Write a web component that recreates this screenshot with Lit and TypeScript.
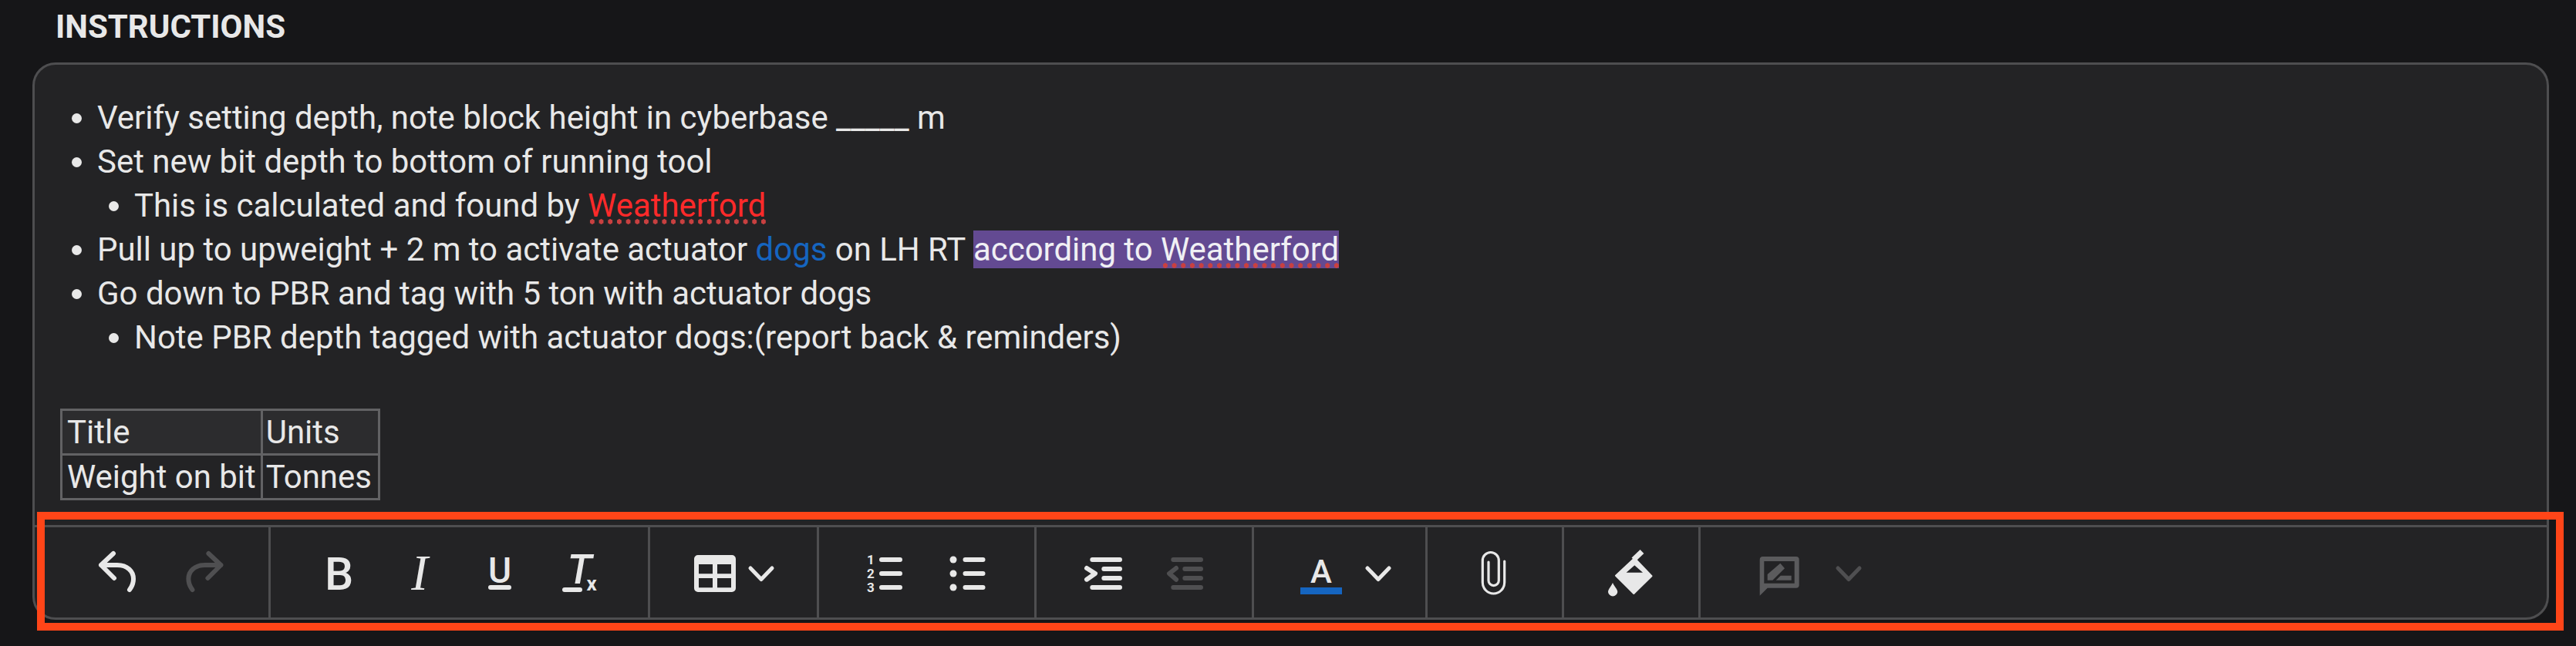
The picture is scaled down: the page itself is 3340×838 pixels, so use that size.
import { LitElement, html, svg, css } from 'lit';
import { customElement } from 'lit/decorators.js';

const chevron = (off = false) => html`
  <svg class="chev ${off ? 'off' : ''}" viewBox="0 0 34 61">
    <path class="line narrow" d="M3 25 L17 39.5 L31 25" />
  </svg>
`;

// 61x61 toolbar glyph box, the content is placed in real pixels
const icon = (body: unknown, off = false) => html`
  <span class="btn"><svg class="ico ${off ? 'off' : ''}" viewBox="0 0 61 61">${body}</svg></span>
`;

const undoPath = svg`<path class="line" d="M24 6 L8 21 L25 38 M8 21 H29 C42 21 50 29 50 39 C50 45 48 49 45 53" />`;
const redoPath = svg`<path class="line" d="M42.4 6 L58.4 21 L41.4 38 M58.4 21 H37.4 C24.4 21 16.4 29 16.4 39 C16.4 45 18.4 49 21.4 53" />`;

const bold = svg`<text class="t-medium" x="31.5" y="53" font-size="59" text-anchor="middle">B</text>`;
const italic = svg`<text class="t-serif" x="31" y="53" font-size="65" text-anchor="middle">I</text>`;
const underline = svg`
  <text class="t-medium" x="30" y="44" font-size="46" text-anchor="middle">U</text>
  <rect x="15" y="47" width="30" height="6" rx="3" />
`;
const clearFormat = svg`
  <text class="t-italic" x="12.5" y="45" font-size="54">T<tspan class="t-sub" font-size="26" dx="-7" dy="9">x</tspan></text>
  <rect x="6" y="50" width="26" height="6" rx="3" />
`;
const ordered = svg`
  <text class="t-bold" x="10" y="20" font-size="17" text-anchor="middle">1</text>
  <text class="t-bold" x="10" y="37.5" font-size="17" text-anchor="middle">2</text>
  <text class="t-bold" x="10" y="56" font-size="17" text-anchor="middle">3</text>
  <path class="line" d="M24 14 H48 M24 32 H48 M24 50 H48" />
`;
const bullets = svg`
  <circle cx="12" cy="14" r="4.5" /><circle cx="12" cy="32" r="4.5" /><circle cx="12" cy="50" r="4.5" />
  <path class="line" d="M27.5 14 H50.5 M27.5 32 H50.5 M27.5 50 H50.5" />
`;
const indent = svg`
  <path class="line" d="M15.3 14 H51 M30.3 26 H51 M30.3 38 H51 M15.3 50 H51" />
  <path class="line" d="M8 25 L19 32 L8 39.7" />
`;
const outdent = svg`
  <path class="line" d="M15.3 14 H51 M30.3 26 H51 M30.3 38 H51 M15.3 50 H51" />
  <path class="line" d="M19 25 L10 32 L19 39.7" />
`;
const clip = svg`
  <path class="thin" d="M42.7 16 V43.5 A14.2 14.5 0 0 1 14.3 43.5 V15 A10.5 10.5 0 0 1 35.3 15 V41 A6.6 6.6 0 0 1 22 41 V17" />
`;
const bucket = svg`
  <path class="soft" fill-rule="evenodd" d="M10 34.7 L34.3 12 L56.5 35.3 L33.3 58 Z M21 31.7 H47.7 L34.3 20 Z" />
  <path class="bar" d="M33 14 L44 3.5" />
  <path d="M6 44 C8 49 12.3 52 12.3 56 A6.2 6.2 0 0 1 0 56 C0 52 4 49 6 44 Z" />
`;

@customElement('app-root')
export class AppRoot extends LitElement {
  static styles = css`
    :host {
      display: block;
      height: 838px;
      overflow: hidden;
      background-color: #161618;
      color: #e8e8e8;
      font-family: 'Roboto', sans-serif;
    }

    .page {
      position: relative;
      height: 838px;
    }

    .title {
      margin: 0;
      padding-left: 72px;
      height: 81px;
      line-height: 70px;
      font-size: 42px;
      font-weight: 700;
      color: #e8e8e8;
    }

    .panel {
      display: flex;
      flex-direction: column;
      box-sizing: border-box;
      margin-left: 42px;
      width: 3263px;
      height: 723px;
      background-color: #232325;
      border: 3px solid #4e4e50;
      border-radius: 30px;
      overflow: hidden;
    }

    .editor {
      flex: 1;
      padding-top: 40px;
      font-size: 41.95px;
      line-height: 57px;
    }

    ul {
      margin: 0;
      padding-left: 81px;
      list-style-type: disc;
    }

    ul ul {
      padding-left: 48px;
      list-style-type: disc;
    }

    .blank {
      height: 57px;
    }

    .spell {
      background-image: radial-gradient(circle, #c94040 3px, transparent 3.4px);
      background-size: 11.7px 7px;
      background-repeat: repeat-x;
      background-position: 0 100%;
    }

    .red {
      color: #ff2a2a;
    }

    .blue {
      color: #1565c0;
    }

    .hl {
      background-color: #634a92;
      color: #f0f0f4;
    }

    table {
      margin: 7px 0 0 33px;
      border-collapse: collapse;
      line-height: 55px;
    }

    td {
      border: 3px solid #626264;
      padding: 0 6px;
    }

    td + td {
      padding: 0 8px 0 4px;
    }

    tr.head td {
      background-color: #2c2c2e;
    }

    .toolbar {
      display: flex;
      height: 117px;
      border-top: 3px solid #4e4e50;
    }

    .group {
      display: flex;
      align-items: center;
      flex: none;
      height: 117px;
      padding: 0 34px 0 35px;
      border-right: 3px solid #4e4e50;
    }

    .group.history {
      padding: 0 37px 0 56px;
    }

    .group.table-drop {
      padding: 0 55px 0 57px;
      gap: 16px;
    }

    .group.color-drop {
      padding: 0 44px 0 60px;
      gap: 30px;
    }

    .group.single {
      padding: 0 56px 0 57px;
    }

    .group.comment {
      padding: 0 0 0 76px;
      gap: 45px;
      border-right: none;
    }

    .btn {
      display: flex;
      justify-content: center;
      width: 105px;
    }

    svg {
      display: block;
      flex: none;
      color: #e8e8e8;
      fill: currentColor;
      overflow: visible;
    }

    svg.off {
      color: #4f4f51;
    }

    .ico {
      width: 61px;
      height: 61px;
    }

    .wide {
      width: 54px;
      height: 61px;
    }

    .chev {
      width: 34px;
      height: 61px;
    }

    .line {
      fill: none;
      stroke: currentColor;
      stroke-width: 6;
      stroke-linecap: round;
      stroke-linejoin: round;
    }

    .line.narrow {
      stroke-width: 5;
    }

    .thin {
      fill: none;
      stroke: currentColor;
      stroke-width: 3.2;
      stroke-linecap: round;
    }

    .soft {
      stroke: currentColor;
      stroke-width: 2;
      stroke-linejoin: round;
    }

    .bar {
      fill: none;
      stroke: currentColor;
      stroke-width: 7;
    }

    .t-medium {
      font-family: 'Roboto', sans-serif;
      font-weight: 500;
    }

    .t-bold {
      font-family: 'Roboto', sans-serif;
      font-weight: 700;
    }

    .t-italic {
      font-family: 'Roboto', sans-serif;
      font-weight: 500;
      font-style: italic;
    }

    .t-sub {
      font-weight: 700;
      font-style: normal;
    }

    .t-serif {
      font-family: 'Liberation Serif', serif;
      font-style: italic;
    }

    .comment-ico {
      color: #5b5b5d;
    }

    .marker {
      position: absolute;
      left: 48px;
      top: 664px;
      box-sizing: border-box;
      width: 3276px;
      height: 154px;
      border: 10px solid #ff4518;
      pointer-events: none;
    }
  `;

  render() {
    return html`
      <div class="page">
        <h2 class="title">INSTRUCTIONS</h2>
        <div class="panel">
          <div class="editor">
            <ul>
              <li>Verify setting depth, note block height in cyberbase _____ m</li>
              <li>Set new bit depth to bottom of running tool
                <ul>
                  <li>This is calculated and found by <span class="red spell">Weatherford</span></li>
                </ul>
              </li>
              <li>Pull up to upweight + 2 m to activate actuator <span class="blue">dogs</span> on LH RT <span class="hl">according to <span class="spell">Weatherford</span></span></li>
              <li>Go down to PBR and tag with 5 ton with actuator dogs
                <ul>
                  <li>Note PBR depth tagged with actuator dogs:(report back &amp; reminders)</li>
                </ul>
              </li>
            </ul>
            <div class="blank"></div>
            <table>
              <tr class="head"><td>Title</td><td>Units</td></tr>
              <tr><td>Weight on bit</td><td>Tonnes</td></tr>
            </table>
          </div>
          <div class="toolbar">
            <div class="group history">
              ${icon(undoPath)}
              ${icon(redoPath, true)}
            </div>
            <div class="group">
              ${icon(bold)}
              ${icon(italic)}
              ${icon(underline)}
              ${icon(clearFormat)}
            </div>
            <div class="group table-drop">
              <svg class="wide" viewBox="0 0 54 61">
                <path fill-rule="evenodd" d="M5 8 H49 A5 5 0 0 1 54 13 V51 A5 5 0 0 1 49 56 H5 A5 5 0 0 1 0 51 V13 A5 5 0 0 1 5 8 Z M6 20 V32.3 H24 V20 Z M30 20 V32.3 H48 V20 Z M6 38 V50.3 H24 V38 Z M30 38 V50.3 H48 V38 Z" />
              </svg>
              ${chevron()}
            </div>
            <div class="group">
              ${icon(ordered)}
              ${icon(bullets)}
            </div>
            <div class="group">
              ${icon(indent)}
              ${icon(outdent, true)}
            </div>
            <div class="group color-drop">
              <svg class="wide" viewBox="0 0 54 61">
                <text class="t-medium" x="27" y="44" font-size="42" text-anchor="middle">A</text>
                <rect x="0" y="50" width="54" height="9" fill="#1565c0" />
              </svg>
              ${chevron()}
            </div>
            <div class="group single">
              <svg class="ico" viewBox="0 0 61 61">${clip}</svg>
            </div>
            <div class="group single">
              <svg class="ico" viewBox="0 0 61 61">${bucket}</svg>
            </div>
            <div class="group comment">
              <svg class="wide comment-ico" viewBox="0 0 54 61">
                <path fill-rule="evenodd" d="M4.7 10 H47.7 A4 4 0 0 1 51.7 14 V46.7 A4 4 0 0 1 47.7 50.7 H10.7 L0.7 60.7 V14 A4 4 0 0 1 4.7 10 Z M6.3 16 V44.7 H45.7 V16 Z" />
                <path d="M27.3 18.7 L33 25.3 L17.3 40.7 H10.7 V33 Z" />
                <path d="M21.7 40.7 L27.7 34.7 H41.7 V40.7 Z" />
              </svg>
              ${chevron(true)}
            </div>
          </div>
        </div>
        <div class="marker"></div>
      </div>
    `;
  }
}
